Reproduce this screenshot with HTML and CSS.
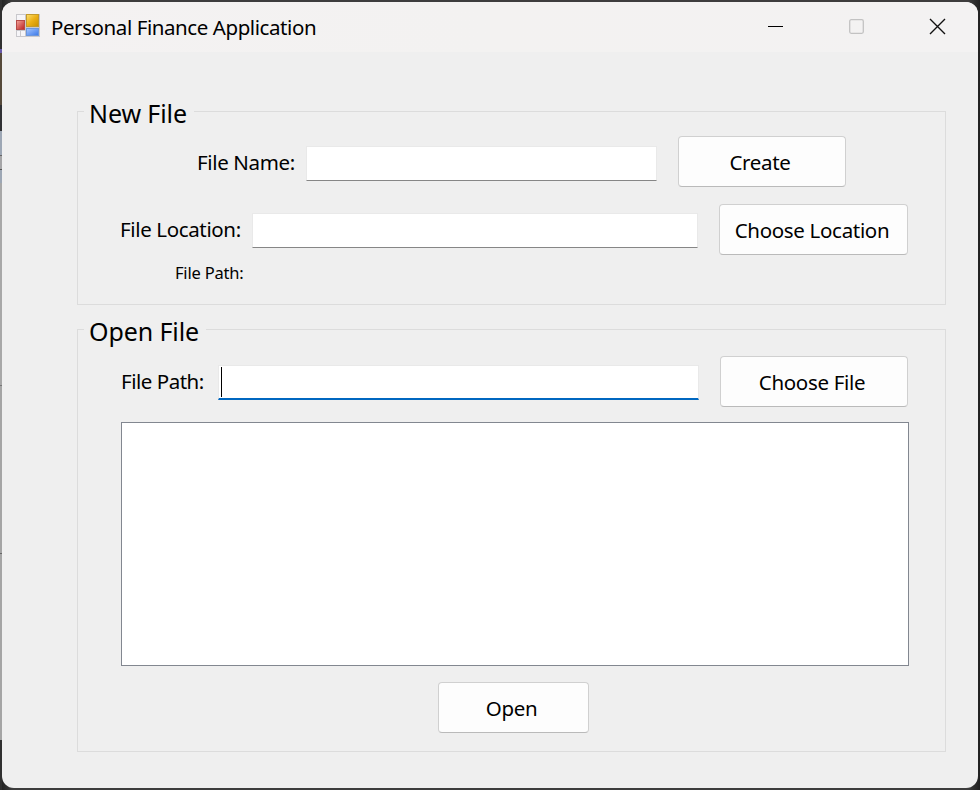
FILE: index.html
```html
<!DOCTYPE html>
<html lang="en">
<head>
<meta charset="utf-8">
<title>Personal Finance Application</title>
<link rel="stylesheet" href="styles.css">
</head>
<body>
<main class="window">
  <header class="titlebar">
    <svg class="app-icon" width="26" height="26" viewBox="0 0 26 26" aria-hidden="true">
      <defs>
        <linearGradient id="gold" x1="0" y1="0" x2="1" y2="1"><stop offset="0" stop-color="#fbe072"/><stop offset=".5" stop-color="#ecb016"/><stop offset="1" stop-color="#c99000"/></linearGradient>
        <linearGradient id="red" x1="0" y1="0" x2="1" y2="1"><stop offset="0" stop-color="#f3a79d"/><stop offset="1" stop-color="#bd1e1e"/></linearGradient>
        <linearGradient id="blue" x1="0" y1="0" x2="1" y2="1"><stop offset="0" stop-color="#a5c6ff"/><stop offset="1" stop-color="#3b78e8"/></linearGradient>
      </defs>
      <rect x="1" y="1" width="24" height="23" fill="#c9c8cc"/>
      <path d="M2 2h8v5H2zM2 18h3v5H2zM6 18h4v5H6z" fill="#f6f5f8"/>
      <rect x="1.5" y="7.5" width="8" height="9" fill="url(#red)" stroke="#b64a48"/>
      <rect x="11.5" y="1.5" width="12" height="12" fill="url(#gold)" stroke="#c39a2c"/>
      <rect x="11.5" y="15.5" width="12" height="7" fill="url(#blue)" stroke="#6b96dc"/>
    </svg>
    <h1 class="title">Personal Finance Application</h1>
    <svg class="controls" width="180" height="18" viewBox="0 0 180 18" aria-hidden="true">
      <path d="M0 8.5h15" stroke="#000"/>
      <rect x="81.7" y="1.7" width="13.6" height="13.6" rx="1.5" fill="none" stroke="#c2c2c2" stroke-width="1.3"/>
      <path d="M162 1l15 15M177 1l-15 15" stroke="#111" stroke-width="1.4"/>
    </svg>
  </header>

  <section class="group group-new">
    <h2 class="legend legend-new">New File</h2>
    <div class="row row-name">
      <label class="label label-name" for="name">File Name:</label>
      <input class="field field-name" id="name">
      <button class="button button-create">Create</button>
    </div>
    <div class="row row-location">
      <label class="label label-location" for="location">File Location:</label>
      <input class="field field-location" id="location">
      <button class="button button-location">Choose Location</button>
    </div>
    <p class="path-note">File Path:</p>
  </section>

  <section class="group group-open">
    <h2 class="legend legend-open">Open File</h2>
    <div class="row row-path">
      <span class="label label-path">File Path:</span>
      <div class="field field-path"><span class="caret"></span></div>
      <button class="button button-file">Choose File</button>
    </div>
    <div class="file-list"></div>
    <button class="button button-open">Open</button>
  </section>
</main>
</body>
</html>
```
FILE: styles.css
```css
* { box-sizing: border-box; }

body {
  margin: 0;
  width: 980px;
  height: 790px;
  padding: 2px;
  overflow: hidden;
  color: #000;
  font-family: "Noto Sans", "Open Sans", sans-serif;
  background:
    linear-gradient(#303030 0 49px, #6658a8 49px 53px, #55493a 53px 105px, #303134 105px 131px, #9da7b5 131px 155px, #666 155px 156px, #a5a5a7 156px 169px, #555 169px 170px, #9da7b5 170px 183px, #a8a8a8 183px 385px, #777 385px 386px, #a5a5a5 386px 553px, #666 553px 554px, #a5a5a5 554px 740px, #303030 740px) 0 0 / 2px 100% no-repeat,
    linear-gradient(90deg, #202020, #3d3d3d 12px 968px, #202020);
}

.window {
  width: 976px;
  height: 786px;
  overflow: hidden;
  border-radius: 12px;
  background: #efefef;
}

.titlebar {
  display: flex;
  align-items: flex-start;
  height: 50px;
  padding: 11px 30px 0 13px;
  background: linear-gradient(90deg, #f4f2f2, #f3f2f1 50%, #f3f2f2);
}

.app-icon { flex: none; }

.title {
  margin: 0 0 0 10px;
  flex: 1;
  font-size: 20.5px;
  font-weight: 400;
  letter-spacing: -0.42px;
  line-height: 28px;
  white-space: nowrap;
}

.controls { flex: none; margin: 5px 0 0; }

.group {
  position: relative;
  width: 869px;
  margin-left: 75px;
  border: 1px solid #dcdcdc;
}

.group-new { height: 194px; margin-top: 59px; padding-top: 24px; }
.group-open { height: 423px; margin-top: 24px; padding-top: 26px; }

.legend {
  position: absolute;
  left: 6px;
  top: -16px;
  margin: 0;
  padding-left: 5px;
  background: #efefef;
  font-size: 25px;
  font-weight: 400;
  letter-spacing: -0.1px;
  line-height: 34px;
  white-space: nowrap;
}

.legend-new { width: 110px; }
.legend-open { width: 122px; }

.row { display: flex; align-items: flex-start; }
.row-name { padding-left: 119px; }
.row-location { padding-left: 42px; margin-top: 17px; }
.row-path { padding-left: 43px; }

.label {
  flex: none;
  margin-top: 11px;
  font-size: 20.5px;
  letter-spacing: -0.36px;
  line-height: 28px;
  white-space: nowrap;
}

.label-name { width: 109px; margin-top: 12px; }
.label-location { width: 132px; }
.label-path { width: 97px; letter-spacing: -0.48px; }

.field {
  flex: none;
  height: 35px;
  padding: 0;
  border: 1px solid #e9e9e9;
  border-bottom-color: #868686;
  background: #fff;
  outline: none;
}

.field-name { width: 351px; margin: 10px 21px 0 0; }
.field-location { width: 446px; margin: 9px 21px 0 0; }
.field-path { width: 481px; margin: 9px 21px 0 0; border-bottom: 2px solid #0067c0; }

.caret { display: block; width: 1px; height: 30px; margin: 1px 0 0 2px; background: #000; }

.button {
  flex: none;
  height: 51px;
  padding: 0;
  border: 1px solid #d0d0d0;
  border-bottom-color: #bababa;
  border-radius: 4px;
  background: #fdfdfd;
  color: #000;
  font-family: inherit;
  font-size: 20.5px;
  letter-spacing: -0.32px;
  line-height: 28px;
  white-space: nowrap;
}

.button-create { width: 168px; padding-right: 4px; }
.button-location { width: 189px; padding-right: 3px; }
.button-file { width: 188px; padding-right: 4px; }
.button-open { display: block; width: 151px; margin: 16px 0 0 360px; padding-right: 4px; }

.path-note {
  margin: 6px 0 0 97px;
  font-size: 16.5px;
  letter-spacing: -0.2px;
  line-height: 24px;
}

.file-list {
  width: 788px;
  height: 244px;
  margin: 15px 0 0 43px;
  border: 1px solid #828790;
  background: #fff;
}
```
